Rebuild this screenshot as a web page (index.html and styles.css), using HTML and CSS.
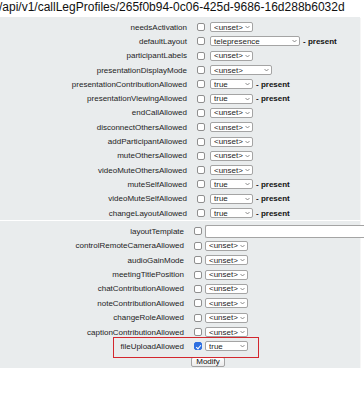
FILE: index.html
```html
<!DOCTYPE html>
<html>
<head>
<title>callLegProfiles</title>
<link rel="stylesheet" href="styles.css">
</head>
<body>
<div class="path">/api/v1/callLegProfiles/265f0b94-0c06-425d-9686-16d288b6032d</div>
<form class="panel">
  <div class="params upper">
    <label>needsActivation</label><span class="tick"><input type="checkbox"></span>
    <span class="val"><span class="sel"><select><option>&lt;unset&gt;</option></select><svg viewBox="0 0 6 4"><path d="M0.6 0.8L3 3.2L5.4 0.8"/></svg></span></span>

    <label>defaultLayout</label><span class="tick"><input type="checkbox"></span>
    <span class="val"><span class="sel wide"><select><option>telepresence</option></select><svg viewBox="0 0 6 4"><path d="M0.6 0.8L3 3.2L5.4 0.8"/></svg></span><b>- present</b></span>

    <label>participantLabels</label><span class="tick"><input type="checkbox"></span>
    <span class="val"><span class="sel"><select><option>&lt;unset&gt;</option></select><svg viewBox="0 0 6 4"><path d="M0.6 0.8L3 3.2L5.4 0.8"/></svg></span></span>

    <label>presentationDisplayMode</label><span class="tick"><input type="checkbox"></span>
    <span class="val"><span class="sel mid"><select><option>&lt;unset&gt;</option></select><svg viewBox="0 0 6 4"><path d="M0.6 0.8L3 3.2L5.4 0.8"/></svg></span></span>

    <label>presentationContributionAllowed</label><span class="tick"><input type="checkbox"></span>
    <span class="val"><span class="sel"><select><option>true</option></select><svg viewBox="0 0 6 4"><path d="M0.6 0.8L3 3.2L5.4 0.8"/></svg></span><b>- present</b></span>

    <label>presentationViewingAllowed</label><span class="tick"><input type="checkbox"></span>
    <span class="val"><span class="sel"><select><option>true</option></select><svg viewBox="0 0 6 4"><path d="M0.6 0.8L3 3.2L5.4 0.8"/></svg></span><b>- present</b></span>

    <label>endCallAllowed</label><span class="tick"><input type="checkbox"></span>
    <span class="val"><span class="sel"><select><option>&lt;unset&gt;</option></select><svg viewBox="0 0 6 4"><path d="M0.6 0.8L3 3.2L5.4 0.8"/></svg></span></span>

    <label>disconnectOthersAllowed</label><span class="tick"><input type="checkbox"></span>
    <span class="val"><span class="sel"><select><option>&lt;unset&gt;</option></select><svg viewBox="0 0 6 4"><path d="M0.6 0.8L3 3.2L5.4 0.8"/></svg></span></span>

    <label>addParticipantAllowed</label><span class="tick"><input type="checkbox"></span>
    <span class="val"><span class="sel"><select><option>&lt;unset&gt;</option></select><svg viewBox="0 0 6 4"><path d="M0.6 0.8L3 3.2L5.4 0.8"/></svg></span></span>

    <label>muteOthersAllowed</label><span class="tick"><input type="checkbox"></span>
    <span class="val"><span class="sel"><select><option>&lt;unset&gt;</option></select><svg viewBox="0 0 6 4"><path d="M0.6 0.8L3 3.2L5.4 0.8"/></svg></span></span>

    <label>videoMuteOthersAllowed</label><span class="tick"><input type="checkbox"></span>
    <span class="val"><span class="sel"><select><option>&lt;unset&gt;</option></select><svg viewBox="0 0 6 4"><path d="M0.6 0.8L3 3.2L5.4 0.8"/></svg></span></span>

    <label>muteSelfAllowed</label><span class="tick"><input type="checkbox"></span>
    <span class="val"><span class="sel"><select><option>true</option></select><svg viewBox="0 0 6 4"><path d="M0.6 0.8L3 3.2L5.4 0.8"/></svg></span><b>- present</b></span>

    <label>videoMuteSelfAllowed</label><span class="tick"><input type="checkbox"></span>
    <span class="val"><span class="sel"><select><option>true</option></select><svg viewBox="0 0 6 4"><path d="M0.6 0.8L3 3.2L5.4 0.8"/></svg></span><b>- present</b></span>

    <label>changeLayoutAllowed</label><span class="tick"><input type="checkbox"></span>
    <span class="val"><span class="sel"><select><option>true</option></select><svg viewBox="0 0 6 4"><path d="M0.6 0.8L3 3.2L5.4 0.8"/></svg></span><b>- present</b></span>
  </div>

  <div class="params lower">
    <label>layoutTemplate</label><span class="tick"><input type="checkbox"></span>
    <span class="val"><input class="text" type="text"></span>

    <label>controlRemoteCameraAllowed</label><span class="tick"><input type="checkbox"></span>
    <span class="val"><span class="sel"><select><option>&lt;unset&gt;</option></select><svg viewBox="0 0 6 4"><path d="M0.6 0.8L3 3.2L5.4 0.8"/></svg></span></span>

    <label>audioGainMode</label><span class="tick"><input type="checkbox"></span>
    <span class="val"><span class="sel"><select><option>&lt;unset&gt;</option></select><svg viewBox="0 0 6 4"><path d="M0.6 0.8L3 3.2L5.4 0.8"/></svg></span></span>

    <label>meetingTitlePosition</label><span class="tick"><input type="checkbox"></span>
    <span class="val"><span class="sel"><select><option>&lt;unset&gt;</option></select><svg viewBox="0 0 6 4"><path d="M0.6 0.8L3 3.2L5.4 0.8"/></svg></span></span>

    <label>chatContributionAllowed</label><span class="tick"><input type="checkbox"></span>
    <span class="val"><span class="sel"><select><option>&lt;unset&gt;</option></select><svg viewBox="0 0 6 4"><path d="M0.6 0.8L3 3.2L5.4 0.8"/></svg></span></span>

    <label>noteContributionAllowed</label><span class="tick"><input type="checkbox"></span>
    <span class="val"><span class="sel"><select><option>&lt;unset&gt;</option></select><svg viewBox="0 0 6 4"><path d="M0.6 0.8L3 3.2L5.4 0.8"/></svg></span></span>

    <label>changeRoleAllowed</label><span class="tick"><input type="checkbox"></span>
    <span class="val"><span class="sel"><select><option>&lt;unset&gt;</option></select><svg viewBox="0 0 6 4"><path d="M0.6 0.8L3 3.2L5.4 0.8"/></svg></span></span>

    <label>captionContributionAllowed</label><span class="tick"><input type="checkbox"></span>
    <span class="val"><span class="sel"><select><option>&lt;unset&gt;</option></select><svg viewBox="0 0 6 4"><path d="M0.6 0.8L3 3.2L5.4 0.8"/></svg></span></span>

    <label>fileUploadAllowed</label><span class="tick"><input type="checkbox" checked></span>
    <span class="val"><span class="sel"><select><option>true</option></select><svg viewBox="0 0 6 4"><path d="M0.6 0.8L3 3.2L5.4 0.8"/></svg></span></span>
  </div>

  <div class="actions"><button type="button">Modify</button></div>

  <div class="highlight"></div>
</form>
</body>
</html>
```

FILE: styles.css
```css
body {
  margin: 0;
  background: #fff;
  font-family: "Liberation Sans", Arial, sans-serif;
  color: #1d1d1d;
  overflow: hidden;
}

.path {
  font-size: 12px;
  line-height: 14px;
  height: 14px;
  margin-left: -1px;
  white-space: nowrap;
  color: #111;
}

.panel {
  position: relative;
  width: 360px;
  margin: 3px 0 0;
  padding: 3px 0 1px;
  background: #e9eced;
  box-shadow: 0 1px 1px #c8cacb;
  font-size: 8px;
}

.params {
  display: grid;
  align-items: center;
}

.upper {
  grid-template-columns: 187px 23px 1fr;
  grid-auto-rows: 14.3px;
}

.lower {
  grid-template-columns: 184px 21px 1fr;
  grid-auto-rows: 14.4px;
  border-top: 1px solid #fff;
  padding-top: 3px;
}

.params label {
  text-align: right;
  white-space: nowrap;
}

.tick {
  display: flex;
  align-items: center;
  padding-left: 10px;
}

.lower .tick {
  padding-left: 9.5px;
}

.tick input {
  appearance: none;
  -webkit-appearance: none;
  margin: 0;
  width: 8px;
  height: 8px;
  box-sizing: border-box;
  border: 0.8px solid #8f8f8f;
  border-radius: 2px;
  background: #fff;
  position: relative;
}

.tick input:checked {
  background: #2e6fe0;
  border-color: #2e6fe0;
}

.tick input:checked::after {
  content: "";
  position: absolute;
  left: 2.2px;
  top: 0.4px;
  width: 2px;
  height: 4px;
  border: solid #fff;
  border-width: 0 1.2px 1.2px 0;
  transform: rotate(40deg);
}

.val {
  display: flex;
  align-items: center;
  white-space: nowrap;
}

.sel {
  display: flex;
  align-items: center;
  box-sizing: border-box;
  width: 43px;
  height: 10px;
  background: #fff;
  border: 0.8px solid #a4a4a4;
  border-radius: 2px;
}

.sel.mid {
  width: 62px;
}

.sel.wide {
  width: 90px;
}

.sel select {
  appearance: none;
  -webkit-appearance: none;
  flex: 1;
  min-width: 0;
  border: 0;
  margin: 0;
  padding: 0 0 0 3px;
  background: transparent;
  font: 8px "Liberation Sans", Arial, sans-serif;
  color: #1d1d1d;
  height: 9px;
  line-height: 9px;
}

.sel svg {
  width: 5px;
  height: 4px;
  margin-right: 2px;
  fill: none;
  stroke: #555;
  stroke-width: 0.8;
}

.val b {
  margin-left: 3px;
  color: #111;
}

.text {
  box-sizing: border-box;
  width: 159px;
  height: 13px;
  margin: 0;
  border: 0.8px solid #a4a4a4;
  border-radius: 2px 0 0 2px;
  border-right: 0;
  background: #fff;
}

.actions {
  display: flex;
  padding-left: 191px;
  margin-top: 3px;
}

.actions button {
  box-sizing: border-box;
  width: 34px;
  height: 10px;
  padding: 0;
  font: 8px "Liberation Sans", Arial, sans-serif;
  line-height: 8px;
  color: #111;
  background: linear-gradient(#fdfdfd, #ebebeb);
  border: 0.8px solid #a3a3a3;
  border-radius: 2px;
}

.highlight {
  position: absolute;
  left: 113px;
  top: 320px;
  width: 146px;
  height: 21px;
  box-sizing: border-box;
  border: 1.5px solid #d3272e;
}
```
